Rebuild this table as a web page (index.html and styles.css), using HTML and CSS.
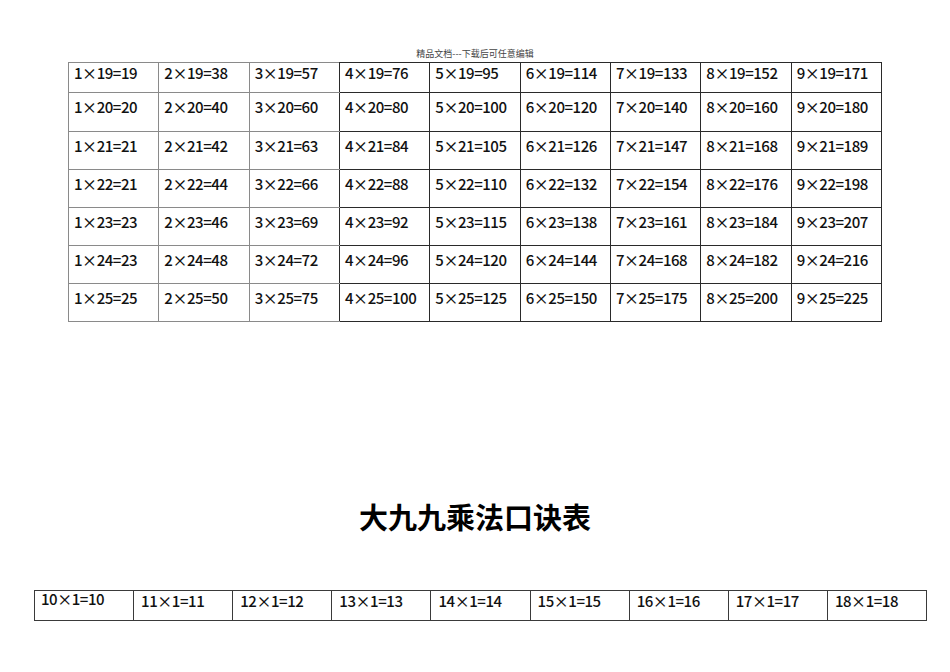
FILE: index.html
```html
<!DOCTYPE html>
<html lang="zh">
<head>
<meta charset="utf-8">
<title>大九九乘法口诀表</title>
<link rel="stylesheet" href="styles.css">
</head>
<body>
<div class="page">
  <div class="doc-head">精品文档---下载后可任意编辑</div>
  <table class="grid top">
    <tbody>
      <tr class="first">
        <td class="g">1×19=19</td><td class="g">2×19=38</td><td class="g g3">3×19=57</td><td>4×19=76</td><td>5×19=95</td><td>6×19=114</td><td>7×19=133</td><td>8×19=152</td><td>9×19=171</td>
      </tr>
      <tr>
        <td class="g">1×20=20</td><td class="g">2×20=40</td><td class="g g3">3×20=60</td><td>4×20=80</td><td>5×20=100</td><td>6×20=120</td><td>7×20=140</td><td>8×20=160</td><td>9×20=180</td>
      </tr>
      <tr>
        <td class="g">1×21=21</td><td class="g">2×21=42</td><td class="g g3">3×21=63</td><td>4×21=84</td><td>5×21=105</td><td>6×21=126</td><td>7×21=147</td><td>8×21=168</td><td>9×21=189</td>
      </tr>
      <tr>
        <td class="g">1×22=21</td><td class="g">2×22=44</td><td class="g g3">3×22=66</td><td>4×22=88</td><td>5×22=110</td><td>6×22=132</td><td>7×22=154</td><td>8×22=176</td><td>9×22=198</td>
      </tr>
      <tr>
        <td class="g">1×23=23</td><td class="g">2×23=46</td><td class="g g3">3×23=69</td><td>4×23=92</td><td>5×23=115</td><td>6×23=138</td><td>7×23=161</td><td>8×23=184</td><td>9×23=207</td>
      </tr>
      <tr>
        <td class="g">1×24=23</td><td class="g">2×24=48</td><td class="g g3">3×24=72</td><td>4×24=96</td><td>5×24=120</td><td>6×24=144</td><td>7×24=168</td><td>8×24=182</td><td>9×24=216</td>
      </tr>
      <tr>
        <td class="g">1×25=25</td><td class="g">2×25=50</td><td class="g g3">3×25=75</td><td>4×25=100</td><td>5×25=125</td><td>6×25=150</td><td>7×25=175</td><td>8×25=200</td><td>9×25=225</td>
      </tr>
    </tbody>
  </table>

  <h1 class="title">大九九乘法口诀表</h1>

  <table class="grid bottom">
    <tbody>
      <tr>
        <td class="hi">10×1=10</td><td>11×1=11</td><td>12×1=12</td><td>13×1=13</td><td>14×1=14</td><td>15×1=15</td><td>16×1=16</td><td>17×1=17</td><td>18×1=18</td>
      </tr>
    </tbody>
  </table>
</div>
</body>
</html>
```

FILE: styles.css
```css
html, body {
  margin: 0;
  padding: 0;
  background: #ffffff;
}

.page {
  width: 950px;
  height: 672px;
  overflow: hidden;
  padding-top: 48px;
  box-sizing: border-box;
  font-family: "Noto Sans CJK SC", "Liberation Sans", sans-serif;
  color: #111;
}

.doc-head {
  text-align: center;
  font-size: 9px;
  line-height: 12px;
  color: #444;
  margin: 0 0 2px 0;
}

.grid {
  border-collapse: collapse;
  table-layout: fixed;
}

.grid td {
  border: 1px solid #2a2a2a;
  vertical-align: top;
  text-align: left;
  white-space: nowrap;
  font-size: 15px;
  line-height: 18px;
  font-weight: 500;
  letter-spacing: -0.45px;
  padding: 5px 0 0 5px;
  box-sizing: border-box;
}

.top {
  width: 814px;
  margin-left: 68px;
}

.top tr {
  height: 38px;
}

.top tr:nth-child(2) {
  height: 39px;
}

.top tr.first {
  height: 30px;
}

.top tr.first td {
  padding-top: 1px;
}

.top td.g {
  border-color: #8a8a8a;
}

.top td.g3 {
  border-right-color: #2a2a2a;
}

.title {
  margin: 176px 0 0 0;
  text-align: center;
  font-size: 29px;
  line-height: 36px;
  font-weight: 700;
  color: #000;
}

.bottom {
  width: 893px;
  margin: 56px 0 0 34px;
}

.bottom tr {
  height: 30px;
}

.bottom td {
  border-color: #3a3a3a;
  padding-top: 1px;
  padding-left: 7px;
}

.bottom td.hi {
  padding-top: 0;
  padding-left: 6px;
  line-height: 16px;
}
```
